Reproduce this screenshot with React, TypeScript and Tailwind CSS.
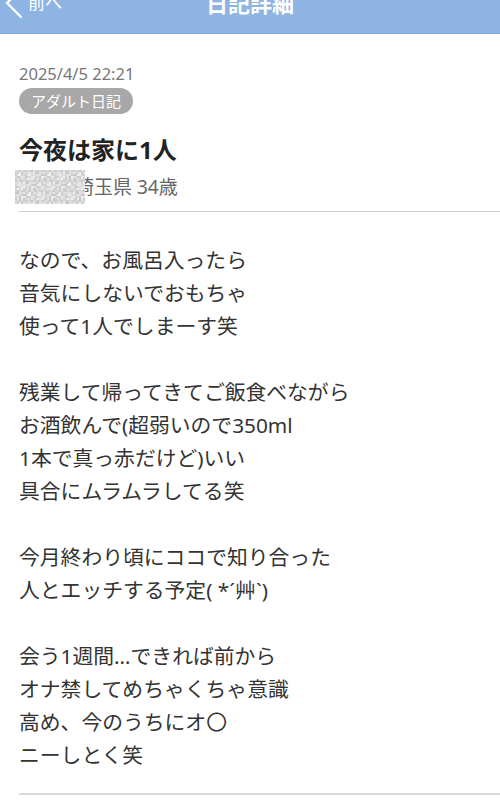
import React from 'react';

const body = [
  'なので、お風呂入ったら',
  '音気にしないでおもちゃ',
  '使って1人でしまーす笑',
  '',
  '残業して帰ってきてご飯食べながら',
  'お酒飲んで(超弱いので350ml',
  '1本で真っ赤だけど)いい',
  '具合にムラムラしてる笑',
  '',
  '今月終わり頃にココで知り合った',
  '人とエッチする予定( *´艸`)',
  '',
  '会う1週間…できれば前から',
  'オナ禁してめちゃくちゃ意識',
  '高め、今のうちにオ〇',
  'ニーしとく笑',
];

// blurred username placeholder
const BlurBox = () => {
  const cells: { x: number; y: number; c: string }[] = [];
  const tones = ['#dcdcdc', '#e8e8e8', '#d3d3d3', '#efefef', '#cacaca', '#e2e2e2'];
  for (let y = 0; y < 34; y += 2) {
    for (let x = 0; x < 70; x += 2) {
      const i = (x * 7 + y * 13 + ((x * y) % 5)) % tones.length;
      cells.push({ x, y, c: tones[i] });
    }
  }
  return (
    <svg width="70" height="34" viewBox="0 0 70 34" className="shrink-0 relative z-10">
      <defs>
        <filter id="soft">
          <feGaussianBlur stdDeviation="0.6" />
        </filter>
      </defs>
      <rect width="70" height="34" fill="#e6e6e6" />
      <g filter="url(#soft)">
        {cells.map((p, i) => (
          <rect key={i} x={p.x} y={p.y} width="2" height="2" fill={p.c} />
        ))}
      </g>
    </svg>
  );
};

export default function App() {
  return (
    <div className="w-[500px] h-[800px] overflow-hidden bg-white font-['Noto_Sans','Noto_Sans_CJK_JP',sans-serif]">
      {/* ナビバー */}
      <div className="relative -mt-[28px] h-[62px] bg-[#8eb4e3] border-b border-[#86aad8] flex items-center justify-center">
        <div className="absolute left-[4px] top-0 h-full flex items-center gap-[4px] text-white">
          <svg width="20" height="32" viewBox="0 0 20 32" fill="none" stroke="white" strokeWidth="2.4" strokeLinecap="round" strokeLinejoin="round">
            <path d="M17 2 L3 16 L17 30" />
          </svg>
          <span className="text-[17px] leading-none">前へ</span>
        </div>
        <span className="text-white text-[22px] font-bold leading-none">日記詳細</span>
      </div>

      {/* ヘッダー情報 */}
      <div className="pl-[19px] pt-[30px]">
        <div className="text-[16.5px] leading-[20px] text-[#777]">2025/4/5 22:21</div>
        <div className="mt-[4px] inline-flex items-center h-[26px] px-[12px] rounded-full bg-[#a8a8a8] text-white text-[15px]">
          アダルト日記
        </div>
        <h1 className="mt-[21px] text-[24px] leading-[30px] font-bold text-[#222]">今夜は家に1人</h1>
        <div className="mt-[5px] -ml-[4px] flex items-center">
          <BlurBox />
          <span className="-ml-[10px] text-[19px] text-[#666]">埼玉県 34歳</span>
        </div>
        <div className="mt-[7px] h-px bg-[#d0d0d0]" />
      </div>

      {/* 本文 */}
      <div className="pl-[19px] pt-[32px]">
        <div className="text-[20.8px] leading-[33px] text-[#333]">
          {body.map((line, i) => (
            <div key={i} className="h-[33px] whitespace-nowrap">{line}</div>
          ))}
        </div>
        <div className="mt-[21px] h-[2px] bg-[#d8d8d8]" />
      </div>
    </div>
  );
}
